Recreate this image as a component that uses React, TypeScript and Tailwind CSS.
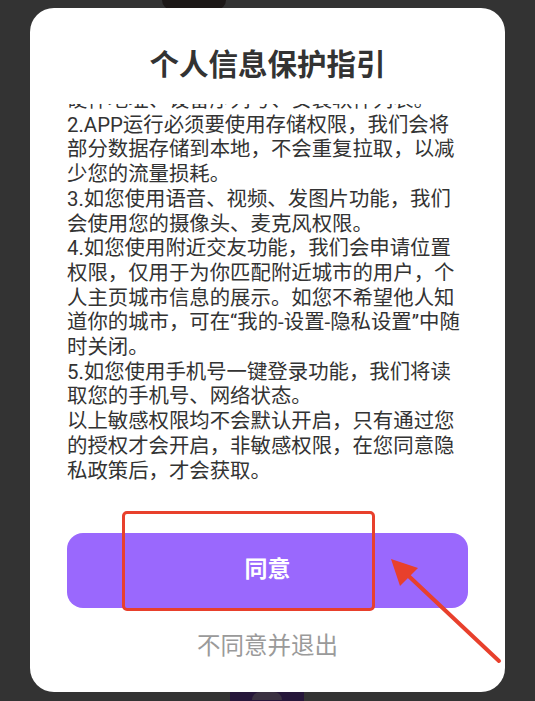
import React from "react"

const LINES = [
  "硬件地址、设备序列号、安装软件列表。",
  "2.APP运行必须要使用存储权限，我们会将",
  "部分数据存储到本地，不会重复拉取，以减",
  "少您的流量损耗。",
  "3.如您使用语音、视频、发图片功能，我们",
  "会使用您的摄像头、麦克风权限。",
  "4.如您使用附近交友功能，我们会申请位置",
  "权限，仅用于为你匹配附近城市的用户，个",
  "人主页城市信息的展示。如您不希望他人知",
  "道你的城市，可在“我的-设置-隐私设置”中随",
  "时关闭。",
  "5.如您使用手机号一键登录功能，我们将读",
  "取您的手机号、网络状态。",
  "以上敏感权限均不会默认开启，只有通过您",
  "的授权才会开启，非敏感权限，在您同意隐",
  "私政策后，才会获取。",
]

const FONT = "font-['Roboto','Noto_Sans_CJK_SC',sans-serif]"

export default function App() {
  return (
    <div className={`relative w-[535px] h-[701px] overflow-hidden bg-[#333333] ${FONT}`}>
      {/* photo behind the dialog, only a sliver shows */}
      <div className="absolute left-[162px] top-0 w-[64px] h-[10px] rounded-b-[20px] bg-[#1c1817]" />
      <div className="absolute left-[230px] top-[688px] w-[74px] h-[13px] bg-[#26173a]">
        <div className="mx-auto mt-[4px] w-[30px] h-[8px] rounded-t-full bg-[#3b3242]" />
      </div>

      <div className="relative px-[30px] pt-[8px]">
        <div className="flex flex-col w-[475px] h-[684px] rounded-[24px] bg-white">
          <h1 className="pt-[37px] text-center text-[29.5px] leading-[40px] font-bold text-[#333333]">
            个人信息保护指引
          </h1>

          <div className="mt-[19px] h-[410px] overflow-hidden px-[37px]">
            <div className="-mt-[16px] text-[20.4px] leading-[24.7px] text-[#333333]">
              {LINES.map((line, i) => (
                <div key={i} className="whitespace-nowrap">
                  {line}
                </div>
              ))}
            </div>
          </div>

          <button className="mx-[37px] mt-[19px] h-[75px] rounded-[16px] bg-[#9a68fd] text-[23px] font-bold text-white">
            同意
          </button>

          <p className="mt-[23px] text-center text-[23.5px] leading-[30px] text-[#9a9a9a]">
            不同意并退出
          </p>
        </div>
      </div>

      {/* annotation */}
      <div className="absolute left-[122px] top-[511px] w-[253px] h-[100px] rounded-[5px] border-[3px] border-[#e8402c]" />
      <svg className="absolute left-0 top-0" width="535" height="701" viewBox="0 0 535 701">
        <line x1="499" y1="661" x2="398" y2="566" stroke="#e8402c" strokeWidth="4" strokeLinecap="round" />
        <polygon points="391,559 418,568 400,586" fill="#e8402c" />
      </svg>
    </div>
  )
}
